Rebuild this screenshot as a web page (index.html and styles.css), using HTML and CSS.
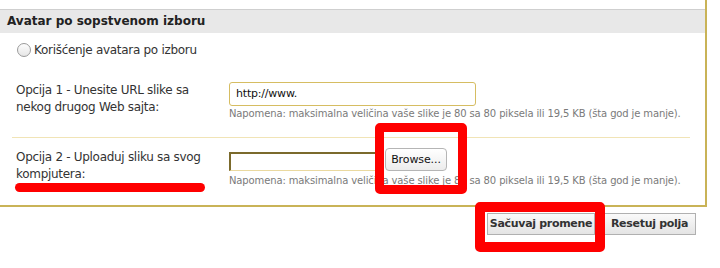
FILE: index.html
```html
<!DOCTYPE html>
<html lang="sr">
<head>
<meta charset="UTF-8">
<title>Avatar po sopstvenom izboru</title>
<link rel="stylesheet" href="styles.css">
</head>
<body>

<div class="panel">
  <div class="panel-head">Avatar po sopstvenom izboru</div>

  <label class="radio-row">
    <span class="radio"></span>
    Korišćenje avatara po izboru
  </label>

  <div class="opt-row">
    <div class="opt-label">Opcija 1 - Unesite URL slike sa nekog drugog Web sajta:</div>
    <div class="opt-field">
      <div class="url-input">http://www.</div>
      <div class="note">Napomena: maksimalna veličina vaše slike je 80 sa 80 piksela ili 19,5 KB (šta god je manje).</div>
    </div>
  </div>

  <div class="opt-row second">
    <div class="opt-label">Opcija 2 - Uploaduj sliku sa svog kompjutera:</div>
    <div class="opt-field">
      <div class="file-line">
        <div class="file-input"></div>
        <div class="browse">Browse...</div>
      </div>
      <div class="note">Napomena: maksimalna veličina vaše slike je 80 sa 80 piksela ili 19,5 KB (šta god je manje).</div>
    </div>
  </div>
</div>

<div class="actions">
  <div class="btn save">Sačuvaj promene</div>
  <div class="btn reset">Resetuj polja</div>
</div>

<!-- red marks drawn over the screenshot -->
<div class="mark mark-browse"></div>
<div class="mark mark-save"></div>
<div class="mark-line"></div>

</body>
</html>
```

FILE: styles.css
```css
body {
  margin: 0;
  background: #fff;
  font-family: 'DejaVu Sans', Verdana, sans-serif;
  color: #222;
  position: relative;
  width: 720px;
  height: 268px;
  overflow: hidden;
}

.panel {
  width: 707px;
  height: 207px;
  padding-top: 9px;
  border-right: 2px solid #c9b357;
  border-bottom: 2px solid #c9b357;
  box-sizing: border-box;
}

.panel-head {
  border-top: 1px solid #cfcfcf;
  background: #e8e8e8;
  height: 23px;
  line-height: 23px;
  padding-left: 7px;
  font-weight: bold;
  font-size: 12px;
  color: #222;
}

.radio-row {
  display: flex;
  align-items: center;
  height: 34px;
  padding-left: 17px;
  font-size: 12px;
  letter-spacing: -0.3px;
  color: #333;
}

.radio {
  width: 12px;
  height: 12px;
  border: 1px solid #9a9a9a;
  border-radius: 50%;
  background: linear-gradient(#fdfdfd, #e6e6e6);
  margin-right: 3px;
}

.opt-row {
  display: grid;
  grid-template-columns: 213px 1fr;
  padding: 15px 0 18px 4px;
  margin: 0 15px 0 12px;
  border-bottom: 1px solid #f1e4b6;
}

.opt-row.second {
  border-bottom: none;
  padding-top: 10px;
  padding-bottom: 0;
}

.opt-label {
  font-size: 12px;
  letter-spacing: -0.3px;
  line-height: 17px;
  color: #333;
  padding-right: 20px;
}

.second .opt-label {
  padding-top: 1px;
}

.url-input {
  width: 247px;
  height: 24px;
  box-sizing: border-box;
  border: 1px solid #d6bd62;
  border-radius: 3px;
  font-size: 11px;
  letter-spacing: -0.2px;
  line-height: 22px;
  padding-left: 6px;
  color: #111;
}

.note {
  font-size: 10px;
  letter-spacing: -0.13px;
  color: #7a7a7a;
  margin-top: 2px;
  white-space: nowrap;
}

.second .note {
  margin-top: 4px;
}

.file-line {
  display: flex;
  align-items: flex-end;
  height: 23px;
}

.file-input {
  width: 149px;
  height: 19px;
  box-sizing: border-box;
  border-top: 2px solid #7b6a2c;
  border-left: 2px solid #7b6a2c;
  border-right: 1px solid #ead9a0;
  border-bottom: 1px solid #ead9a0;
}

.browse {
  margin-left: 7px;
  align-self: flex-start;
  height: 23px;
  width: 62px;
  box-sizing: border-box;
  border: 1px solid #b5b5b5;
  border-radius: 4px;
  background: linear-gradient(#ffffff, #ececec);
  font-size: 11px;
  letter-spacing: -0.1px;
  line-height: 21px;
  text-align: center;
  color: #111;
}

.actions {
  display: flex;
  justify-content: flex-end;
  gap: 8px;
  padding: 6px 24px 0 0;
}

.btn {
  height: 22px;
  box-sizing: border-box;
  border: 1px solid #b0b0b0;
  background: linear-gradient(#fafafa, #e4e4e4);
  font-size: 11px;
  font-weight: bold;
  letter-spacing: -0.3px;
  line-height: 20px;
  text-align: center;
  color: #333;
}

.save {
  width: 108px;
}

.reset {
  width: 93px;
}

.mark {
  position: absolute;
  border: 9px solid #ff0000;
  border-radius: 5px;
  box-sizing: border-box;
}

.mark-browse {
  left: 375px;
  top: 123px;
  width: 92px;
  height: 71px;
}

.mark-save {
  left: 475px;
  top: 202px;
  width: 130px;
  height: 50px;
  border-width: 10px;
}

.mark-line {
  position: absolute;
  left: 15px;
  top: 183px;
  width: 190px;
  height: 9px;
  border-radius: 5px;
  background: #ff0000;
}
```
